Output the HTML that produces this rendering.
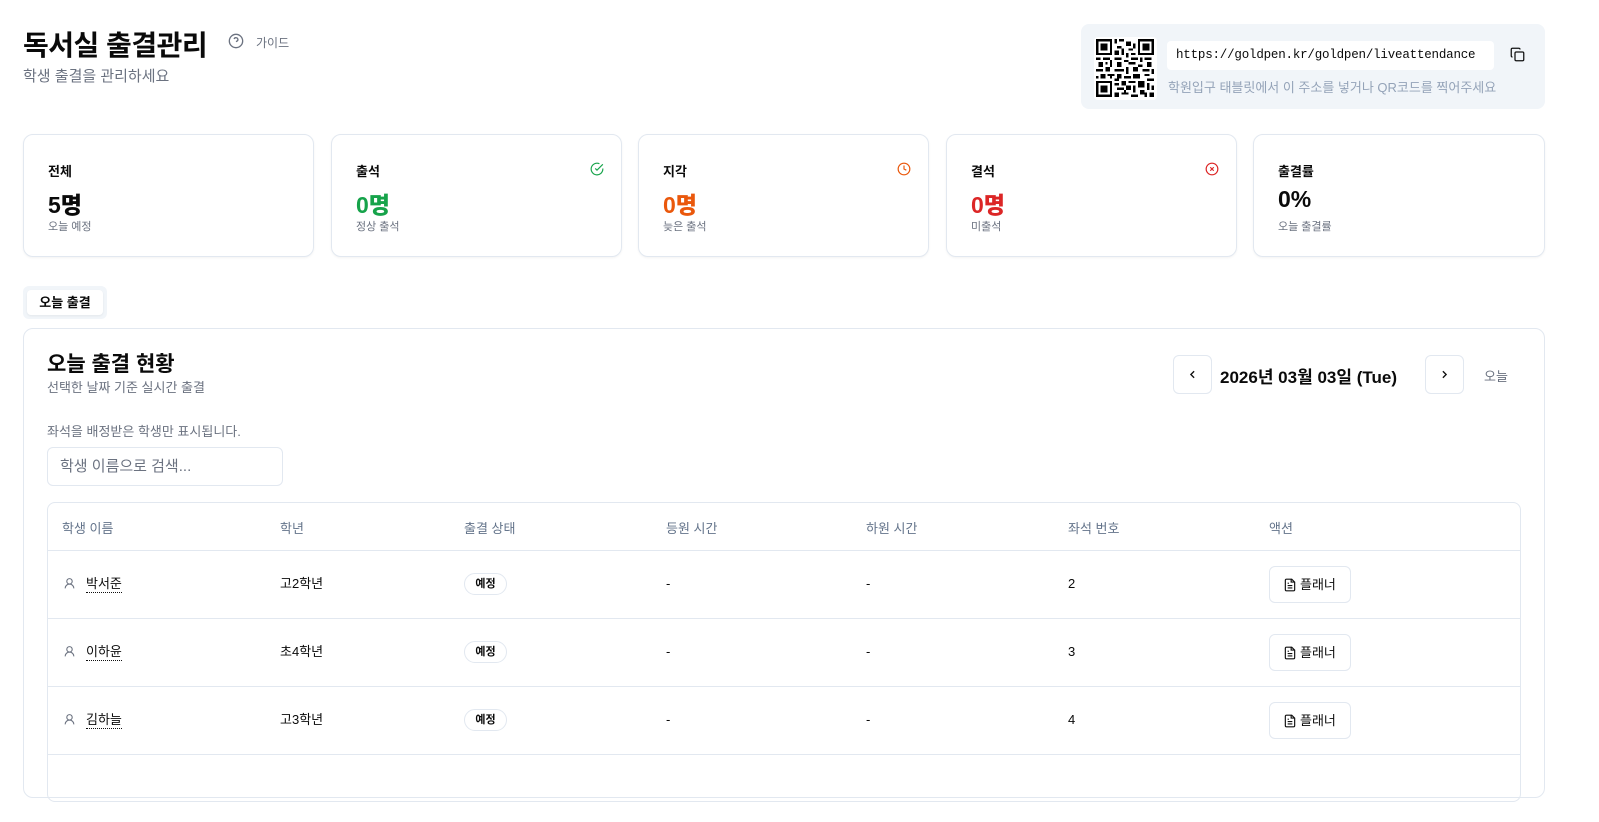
<!DOCTYPE html>
<html><head><meta charset="utf-8">
<style>
*{box-sizing:border-box;margin:0;padding:0}
body{width:1599px;height:777px;overflow:hidden;background:#fff;font-family:"Liberation Sans","Noto Sans CJK KR",sans-serif;color:#0a0a0a;position:relative}
.abs{position:absolute}
.muted{color:#6b7280}
.card{position:absolute;top:134px;width:291px;height:123px;border:1px solid #e2e8f0;border-radius:10px;box-shadow:0 1px 2px rgba(0,0,0,.05)}
.card .l{position:absolute;left:24px;top:26px;font-size:13px;font-weight:600}
.card .n{position:absolute;left:24px;top:51px;font-size:23px;font-weight:800}
.card .s{position:absolute;left:24px;top:83px;font-size:11px;color:#6b7280}
.card svg{position:absolute;right:17px;top:27px}
.th{position:absolute;top:518px;font-size:13px;color:#64748b}
.row{position:absolute;left:48px;width:1472px;height:68px;border-top:1px solid #e2e8f0}
.row div{position:absolute;top:25px;font-size:13px;line-height:16px}
.badge{position:absolute;left:416px!important;top:22px!important;width:43px;height:22px;border:1px solid #e2e8f0;border-radius:11px;font-size:11px!important;font-weight:600;text-align:center;line-height:20px!important}
.pl{position:absolute;left:1221px!important;top:15px!important;width:82px;height:37px;border:1px solid #e2e8f0;border-radius:6px;font-size:13px;line-height:35px!important;padding-left:30px}
.pl svg{position:absolute;left:13px;top:11px}
.nm{border-bottom:1px dotted #111}
</style></head><body>
<div class="abs" style="left:23px;top:24px;font-size:28px;font-weight:700;letter-spacing:-0.5px">독서실 출결관리</div>
<svg class="abs" style="left:228px;top:33px" width="16" height="16" viewBox="0 0 24 24" fill="none" stroke="#6b7280" stroke-width="2"><circle cx="12" cy="12" r="10"/><path d="M9.1 9a3 3 0 0 1 5.8 1c0 2-3 3-3 3M12 17h.01"/></svg>
<div class="abs muted" style="left:256px;top:34px;font-size:12px">가이드</div>
<div class="abs muted" style="left:23px;top:65px;font-size:15px">학생 출결을 관리하세요</div>

<div class="abs" style="left:1081px;top:24px;width:464px;height:85px;background:#f1f5f9;border-radius:8px"></div>
<div class="abs" style="left:1094px;top:37px;width:63px;height:63px;background:#fff;border-radius:4px"></div>
<svg class="abs" style="left:1096px;top:39px" width="58" height="58" viewBox="0 0 25 25" shape-rendering="crispEdges">
<g fill="#000">
<path d="M0 0h7v7h-7zM1 1v5h5v-5zM2 2h3v3h-3zM18 0h7v7h-7zM19 1v5h5v-5zM20 2h3v3h-3zM0 18h7v7h-7zM1 19v5h5v-5zM2 20h3v3h-3z" fill-rule="evenodd"/>
<path d="M8 0h1v2h-1zM10 0h2v1h-2zM13 1h2v2h-2zM9 3h2v1h-2zM11 4h1v3h-1zM14 4h2v1h-2zM8 5h2v2h-2zM15 6h2v1h-2zM13 6h1v2h-1zM16 2h1v2h-1zM0 8h2v1h-2zM3 8h3v1h-3zM8 8h3v1h-3zM12 9h2v1h-2zM15 8h3v1h-3zM19 8h1v2h-1zM21 8h3v1h-3zM1 10h2v2h-2zM4 10h1v1h-1zM6 9h1v3h-1zM9 10h2v2h-2zM14 10h3v1h-3zM18 11h2v1h-2zM22 10h2v2h-2zM0 13h3v1h-3zM4 12h2v2h-2zM8 13h4v1h-4zM13 12h1v3h-1zM16 12h2v2h-2zM20 13h3v1h-3zM24 13h1v2h-1zM2 15h2v2h-2zM5 15h3v1h-3zM9 15h2v2h-2zM12 16h3v1h-3zM16 15h3v2h-3zM21 15h2v1h-2zM0 16h1v1h-1zM6 16h1v1h-1zM8 17h2v1h-2zM11 18h2v2h-2zM14 18h3v1h-3zM18 18h3v3h-3zM22 17h3v1h-3zM8 19h2v1h-2zM9 21h3v1h-3zM13 20h2v2h-2zM16 20h1v3h-1zM22 19h1v3h-1zM24 20h1v2h-1zM8 23h2v2h-2zM11 23h3v1h-3zM15 24h3v1h-3zM19 22h2v2h-2zM21 23h1v2h-1zM23 23h2v2h-2zM12 22h1v1h-1z"/>
</g></svg>
<div class="abs" style="left:1167px;top:41px;width:327px;height:29px;background:#fff;border-radius:4px;font-family:'Liberation Mono',monospace;font-size:12.5px;line-height:29px;padding-left:9px;letter-spacing:-0.2px">https://goldpen.kr/goldpen/liveattendance</div>
<svg class="abs" style="left:1510px;top:47px" width="15" height="15" viewBox="0 0 24 24" fill="none" stroke="#111" stroke-width="2"><rect x="8" y="8" width="14" height="14" rx="2"/><path d="M4 16c-1.1 0-2-.9-2-2V4c0-1.1.9-2 2-2h10c1.1 0 2 .9 2 2"/></svg>
<div class="abs" style="left:1168px;top:77px;font-size:13px;color:#94a3b8">학원입구 태블릿에서 이 주소를 넣거나 QR코드를 찍어주세요</div>

<div class="card" style="left:23px"><div class="l">전체</div><div class="n">5명</div><div class="s">오늘 예정</div></div>
<div class="card" style="left:331px"><div class="l">출석</div><div class="n" style="color:#16a34a">0명</div><div class="s">정상 출석</div><svg width="14" height="14" viewBox="0 0 24 24" fill="none" stroke="#16a34a" stroke-width="2"><path d="M22 11.1V12a10 10 0 1 1-5.9-9.1"/><path d="M22 4 12 14l-3-3"/></svg></div>
<div class="card" style="left:638px"><div class="l">지각</div><div class="n" style="color:#ea580c">0명</div><div class="s">늦은 출석</div><svg width="14" height="14" viewBox="0 0 24 24" fill="none" stroke="#ea580c" stroke-width="2"><circle cx="12" cy="12" r="10"/><path d="M12 6v6l4 2"/></svg></div>
<div class="card" style="left:946px"><div class="l">결석</div><div class="n" style="color:#dc2626">0명</div><div class="s">미출석</div><svg width="14" height="14" viewBox="0 0 24 24" fill="none" stroke="#dc2626" stroke-width="2"><circle cx="12" cy="12" r="10"/><path d="M15 9l-6 6M9 9l6 6"/></svg></div>
<div class="card" style="left:1253px;width:292px"><div class="l">출결률</div><div class="n">0%</div><div class="s">오늘 출결률</div></div>

<div class="abs" style="left:23px;top:286px;width:84px;height:33px;background:#f1f5f9;border-radius:6px"></div>
<div class="abs" style="left:27px;top:290px;width:76px;height:25px;background:#fff;border-radius:4px;font-size:13px;font-weight:600;text-align:center;line-height:25px;box-shadow:0 1px 2px rgba(0,0,0,.06)">오늘 출결</div>

<div class="abs" style="left:23px;top:328px;width:1522px;height:470px;border:1px solid #e2e8f0;border-radius:10px"></div>
<div class="abs" style="left:47px;top:348px;font-size:21px;font-weight:700">오늘 출결 현황</div>
<div class="abs muted" style="left:47px;top:377px;font-size:13px">선택한 날짜 기준 실시간 출결</div>
<div class="abs" style="left:1173px;top:355px;width:39px;height:39px;border:1px solid #e2e8f0;border-radius:6px"></div>
<svg class="abs" style="left:1186px;top:368px" width="13" height="13" viewBox="0 0 24 24" fill="none" stroke="#111" stroke-width="2.5"><path d="M15 18l-6-6 6-6"/></svg>
<div class="abs" style="left:1220px;top:363px;font-size:17px;font-weight:700">2026년 03월 03일 (Tue)</div>
<div class="abs" style="left:1425px;top:355px;width:39px;height:39px;border:1px solid #e2e8f0;border-radius:6px"></div>
<svg class="abs" style="left:1438px;top:368px" width="13" height="13" viewBox="0 0 24 24" fill="none" stroke="#111" stroke-width="2.5"><path d="M9 18l6-6-6-6"/></svg>
<div class="abs muted" style="left:1484px;top:366px;font-size:13px">오늘</div>

<div class="abs muted" style="left:47px;top:421px;font-size:13px">좌석을 배정받은 학생만 표시됩니다.</div>
<div class="abs" style="left:47px;top:447px;width:236px;height:39px;border:1px solid #e2e8f0;border-radius:6px;font-size:15px;color:#6b7280;line-height:37px;padding-left:12px">학생 이름으로 검색...</div>

<div class="abs" style="left:47px;top:502px;width:1474px;height:300px;border:1px solid #e2e8f0;border-radius:8px"></div>
<div class="th" style="left:62px">학생 이름</div>
<div class="th" style="left:280px">학년</div>
<div class="th" style="left:464px">출결 상태</div>
<div class="th" style="left:666px">등원 시간</div>
<div class="th" style="left:866px">하원 시간</div>
<div class="th" style="left:1068px">좌석 번호</div>
<div class="th" style="left:1269px">액션</div>

<div class="row" style="top:550px">
<svg style="position:absolute;left:15px;top:26px" width="13" height="13" viewBox="0 0 24 24" fill="none" stroke="#6b7280" stroke-width="2"><circle cx="12" cy="8" r="5"/><path d="M20 21a8 8 0 0 0-16 0"/></svg>
<div style="left:38px" class="nm">박서준</div><div style="left:232px">고2학년</div><div class="badge">예정</div><div style="left:618px">-</div><div style="left:818px">-</div><div style="left:1020px">2</div>
<div class="pl"><svg width="14" height="14" viewBox="0 0 24 24" fill="none" stroke="#111" stroke-width="2"><path d="M15 2H6a2 2 0 0 0-2 2v16a2 2 0 0 0 2 2h12a2 2 0 0 0 2-2V7z"/><path d="M14 2v5h6M16 13H8M16 17H8M10 9H8"/></svg>플래너</div></div>
<div class="row" style="top:618px">
<svg style="position:absolute;left:15px;top:26px" width="13" height="13" viewBox="0 0 24 24" fill="none" stroke="#6b7280" stroke-width="2"><circle cx="12" cy="8" r="5"/><path d="M20 21a8 8 0 0 0-16 0"/></svg>
<div style="left:38px" class="nm">이하윤</div><div style="left:232px">초4학년</div><div class="badge">예정</div><div style="left:618px">-</div><div style="left:818px">-</div><div style="left:1020px">3</div>
<div class="pl"><svg width="14" height="14" viewBox="0 0 24 24" fill="none" stroke="#111" stroke-width="2"><path d="M15 2H6a2 2 0 0 0-2 2v16a2 2 0 0 0 2 2h12a2 2 0 0 0 2-2V7z"/><path d="M14 2v5h6M16 13H8M16 17H8M10 9H8"/></svg>플래너</div></div>
<div class="row" style="top:686px">
<svg style="position:absolute;left:15px;top:26px" width="13" height="13" viewBox="0 0 24 24" fill="none" stroke="#6b7280" stroke-width="2"><circle cx="12" cy="8" r="5"/><path d="M20 21a8 8 0 0 0-16 0"/></svg>
<div style="left:38px" class="nm">김하늘</div><div style="left:232px">고3학년</div><div class="badge">예정</div><div style="left:618px">-</div><div style="left:818px">-</div><div style="left:1020px">4</div>
<div class="pl"><svg width="14" height="14" viewBox="0 0 24 24" fill="none" stroke="#111" stroke-width="2"><path d="M15 2H6a2 2 0 0 0-2 2v16a2 2 0 0 0 2 2h12a2 2 0 0 0 2-2V7z"/><path d="M14 2v5h6M16 13H8M16 17H8M10 9H8"/></svg>플래너</div></div>
<div class="row" style="top:754px"></div>
</body></html>
